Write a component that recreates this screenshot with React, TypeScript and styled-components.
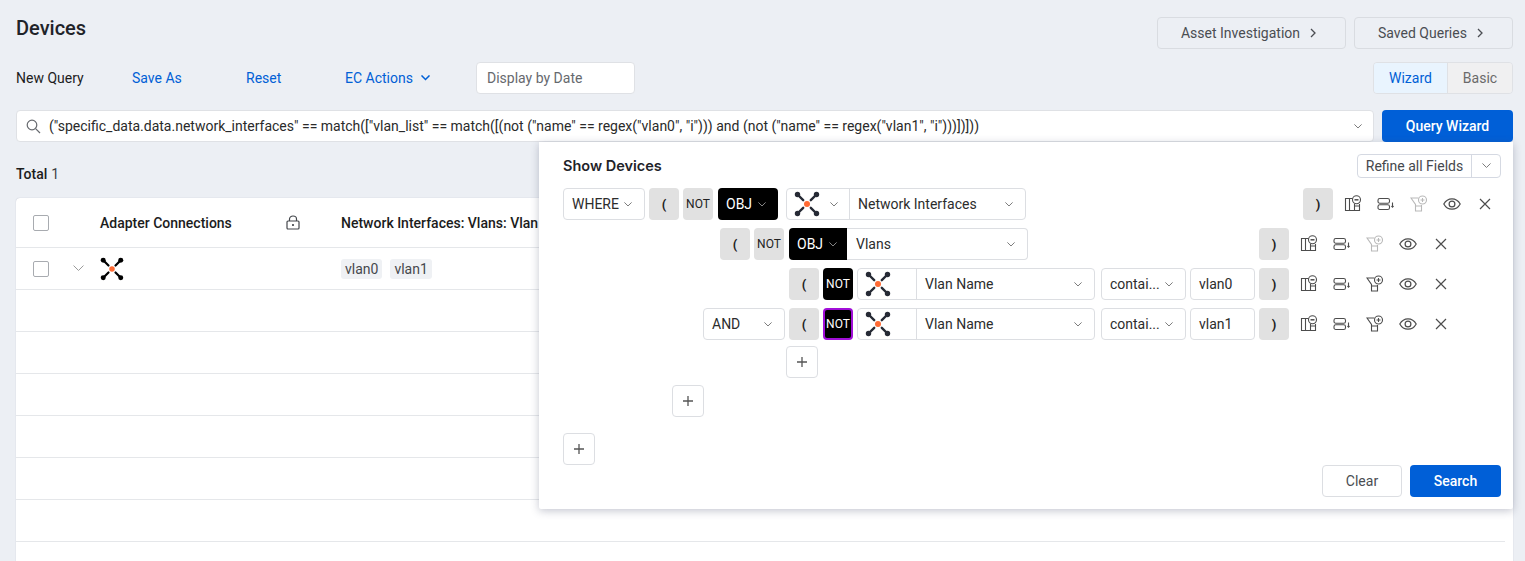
import React from "react";
import styled, { createGlobalStyle } from "styled-components";

const Global = createGlobalStyle`
  html, body { margin: 0; padding: 0; height: 561px; overflow: hidden; background: #eceff4; }
  body { font-family: Roboto, "Liberation Sans", sans-serif; color: #1c1c1c; -webkit-font-smoothing: antialiased; }
  * { box-sizing: border-box; }
  svg { display: block; flex: none; }
`;

const Page = styled.div`
  position: relative;
  height: 561px;
  padding: 17px 12px 0 16px;
  overflow: hidden;
`;
const TitleRow = styled.div`
  display: flex;
  justify-content: space-between;
  height: 32px;
`;
const Title = styled.h1`
  margin: -5px 0 0;
  font-size: 20px;
  line-height: 32px;
  font-weight: 500;
  color: #1f2329;
`;
const NavGroup = styled.div`
  display: flex;
  gap: 8px;
`;
const NavButton = styled.div<{ $w: number }>`
  width: ${(p) => p.$w}px;
  height: 32px;
  display: flex;
  align-items: center;
  justify-content: center;
  gap: 10px;
  padding-right: 6px;
  border: 1px solid #d9dce1;
  border-radius: 4px;
  font-size: 14px;
  color: #4a4d52;
`;
const ActionRow = styled.div`
  display: flex;
  align-items: center;
  height: 32px;
  margin-top: 13px;
  font-size: 14px;
`;
const Action = styled.span<{ $w: number; $plain?: boolean }>`
  display: flex;
  align-items: center;
  gap: 8px;
  width: ${(p) => p.$w}px;
  color: ${(p) => (p.$plain ? "#1c1c1c" : "#0060d6")};
`;
const DateInput = styled.div`
  width: 159px;
  height: 32px;
  display: flex;
  align-items: center;
  padding-left: 10px;
  background: #fff;
  border: 1px solid #dfe1e5;
  border-radius: 4px;
  color: #66696e;
`;
const Toggle = styled.div`
  display: flex;
  margin-left: auto;
  height: 32px;
  border: 1px solid #dfe1e5;
  border-radius: 4px;
  overflow: hidden;
`;
const ToggleItem = styled.div<{ $on?: boolean; $w: number }>`
  width: ${(p) => p.$w}px;
  display: flex;
  align-items: center;
  justify-content: center;
  background: ${(p) => (p.$on ? "#e9f4fe" : "#f0f0f1")};
  color: ${(p) => (p.$on ? "#0060d6" : "#6a6a6a")};
  ${(p) => (p.$on ? "" : "border-left: 1px solid #dfe1e5;")}
`;
const QueryRow = styled.div`
  display: flex;
  gap: 8px;
  height: 32px;
  margin-top: 16px;
`;
const SearchBar = styled.div`
  flex: 1;
  min-width: 0;
  display: flex;
  align-items: center;
  gap: 8px;
  height: 32px;
  padding: 0 11px 0 9px;
  background: #fff;
  border: 1px solid #dfe1e5;
  border-radius: 4px;
  font-size: 14px;
  color: #2a2a2a;
  white-space: nowrap;
`;
const QueryText = styled.span`
  flex: 1;
`;
const PrimaryButton = styled.div<{ $w: number }>`
  width: ${(p) => p.$w}px;
  height: 32px;
  display: flex;
  align-items: center;
  justify-content: center;
  background: #005fd7;
  color: #fff;
  border-radius: 4px;
  font-size: 14px;
  font-weight: 500;
`;
const Total = styled.div`
  margin-top: 24px;
  height: 16px;
  line-height: 16px;
  font-size: 14px;
  color: #3c3f44;
  b { font-weight: 500; color: #1c1c1c; margin-right: 4px; }
`;
const Table = styled.div`
  margin-top: 16px;
  height: 400px;
  padding-right: 8px;
  background: #fff;
  border-radius: 4px 4px 0 0;
  box-shadow: 0 0 1px rgba(90, 100, 130, 0.45);
`;
const HeaderRow = styled.div`
  display: grid;
  grid-template-columns: 84px 241px 1fr;
  align-items: center;
  height: 50px;
  border-bottom: 1px solid #e5e7ea;
  font-size: 14px;
  font-weight: 500;
`;
const BodyRow = styled.div`
  display: grid;
  grid-template-columns: 84px 241px 1fr;
  align-items: center;
  height: 42px;
  border-bottom: 1px solid #e5e7ea;
`;
const FirstCell = styled.div`
  display: flex;
  align-items: center;
  padding-left: 17px;
  gap: 24px;
`;
const SpacedCell = styled.div`
  display: flex;
  align-items: center;
  justify-content: space-between;
  padding-right: 41px;
`;
const Check = styled.span`
  width: 16px;
  height: 16px;
  border: 1px solid #a8abb0;
  border-radius: 2px;
  background: #fff;
`;
const Chips = styled.div`
  display: flex;
  gap: 8px;
`;
const Chip = styled.span`
  height: 20px;
  line-height: 20px;
  padding: 0 4px;
  background: #eff1f4;
  border-radius: 3px;
  font-size: 14px;
  color: #45484d;
`;

const Popup = styled.div`
  position: absolute;
  left: 539px;
  top: 142px;
  width: 974px;
  height: 367px;
  padding: 12px 12px 0 24px;
  background: #fff;
  box-shadow: 0 2px 8px rgba(70, 78, 110, 0.32);
  border-radius: 0 0 2px 2px;
`;
const PopupHead = styled.div`
  display: flex;
  align-items: center;
  justify-content: space-between;
  height: 23px;
`;
const PopupTitle = styled.div`
  font-family: Inter, Roboto, sans-serif;
  font-size: 14.5px;
  font-weight: 600;
  color: #1f2329;
`;
const Refine = styled.div`
  display: flex;
  align-items: center;
  width: 144px;
  height: 24px;
  border: 1px solid #d5d9e2;
  border-radius: 4px;
  font-size: 14px;
  color: #45484d;
`;
const RefineLabel = styled.span`
  width: 114px;
  text-align: center;
  border-right: 1px solid #d5d9e2;
  line-height: 22px;
`;
const RefineArrow = styled.span`
  flex: 1;
  display: flex;
  justify-content: center;
`;
const Rows = styled.div`
  display: flex;
  flex-direction: column;
  gap: 8px;
  margin-top: 11px;
`;
const Row = styled.div<{ $indent: number; $end?: number }>`
  display: flex;
  align-items: stretch;
  gap: 4px;
  height: 32px;
  padding-left: ${(p) => p.$indent}px;
  padding-right: ${(p) => p.$end ?? 0}px;
  font-size: 14px;
`;
const Select = styled.div<{ $w: number; $gap?: number }>`
  width: ${(p) => p.$w}px;
  margin-left: ${(p) => p.$gap ?? 0}px;
  display: flex;
  align-items: center;
  justify-content: space-between;
  padding: 0 12px 0 8px;
  background: #fff;
  border: 1px solid #dcdee2;
  border-radius: 4px;
  color: #2c2c2c;
  white-space: nowrap;
`;
const Paren = styled.div<{ $push?: boolean; $closing?: boolean }>`
  width: 30px;
  display: flex;
  align-items: center;
  justify-content: center;
  background: #e1e1e1;
  border-radius: 4px;
  font-size: 13px;
  font-weight: 700;
  color: #222;
  ${(p) => (p.$push ? "margin-left: auto;" : "")}
  ${(p) => (p.$closing ? "margin-right: -1px;" : "")}
`;
const Not = styled.div<{ $on?: boolean; $focus?: boolean }>`
  width: 30px;
  display: flex;
  align-items: center;
  justify-content: center;
  border-radius: 4px;
  font-size: 12px;
  background: ${(p) => (p.$on ? "#000" : "#e1e1e1")};
  color: ${(p) => (p.$on ? "#fff" : "#222")};
  border: ${(p) => (p.$focus ? "2px solid #a10fd8" : "none")};
`;
const Obj = styled.div<{ $w: number; $gap?: number; $joined?: boolean }>`
  width: ${(p) => p.$w}px;
  margin-left: ${(p) => p.$gap ?? 0}px;
  display: flex;
  align-items: center;
  gap: 6px;
  padding-left: 8px;
  background: #000;
  color: #fff;
  border-radius: ${(p) => (p.$joined ? "4px 0 0 4px" : "4px")};
`;
const Compound = styled.div<{ $w: number; $gap?: number }>`
  width: ${(p) => p.$w}px;
  margin-left: ${(p) => p.$gap ?? 0}px;
  display: flex;
  background: #fff;
  border: 1px solid #dcdee2;
  border-radius: 4px;
  color: #2c2c2c;
`;
const JoinedCompound = styled(Compound)`
  border-left: none;
  border-radius: 0 4px 4px 0;
  margin-left: -4px;
`;
const AdapterPart = styled.div<{ $w: number }>`
  width: ${(p) => p.$w}px;
  display: flex;
  align-items: center;
  justify-content: space-between;
  padding: 0 11px 0 7px;
  border-right: 1px solid #dcdee2;
`;
const FieldPart = styled.div<{ $pad: number }>`
  flex: 1;
  display: flex;
  align-items: center;
  justify-content: space-between;
  padding: 0 12px 0 ${(p) => p.$pad}px;
`;
const Tools = styled.div`
  display: flex;
  align-items: center;
`;
const ToolCell = styled.span<{ $dim?: boolean }>`
  width: 33px;
  display: flex;
  justify-content: center;
  color: ${(p) => (p.$dim ? "#b9b9b9" : "#4c4c4c")};
`;
const AddButton = styled.div<{ $left: number; $top: number }>`
  width: 32px;
  height: 32px;
  margin-left: ${(p) => p.$left}px;
  margin-top: ${(p) => p.$top}px;
  display: flex;
  align-items: center;
  justify-content: center;
  background: #fff;
  border: 1px solid #dcdee2;
  border-radius: 4px;
  color: #555;
`;
const Footer = styled.div`
  display: flex;
  justify-content: flex-end;
  gap: 8px;
`;
const ClearButton = styled.div`
  width: 80px;
  height: 32px;
  display: flex;
  align-items: center;
  justify-content: center;
  border: 1px solid #dcdee2;
  border-radius: 4px;
  font-size: 14px;
  color: #4a4d52;
`;

const Chevron = ({ size = 8, color = "#7b7b7b", w = 1 }: { size?: number; color?: string; w?: number }) => (
  <svg width={size} height={size * 0.6} viewBox="0 0 10 6" fill="none" stroke={color} strokeWidth={w * (10 / size)}>
    <path d="M0.5 0.5 L5 5 L9.5 0.5" />
  </svg>
);
const ChevronRight = () => (
  <svg width="6" height="10" viewBox="0 0 6 10" fill="none" stroke="#4a4d52" strokeWidth="1.3">
    <path d="M1 1 L5 5 L1 9" />
  </svg>
);
const Logo = ({ size = 26, ink = "#262a35" }: { size?: number; ink?: string }) => (
  <svg width={size} height={size} viewBox="0 0 26 26">
    <path d="M3.5 3.5 L9.2 9.2 M22.5 3.5 L16.8 9.2 M3.5 22.5 L9.2 16.8 M22.5 22.5 L16.8 16.8" stroke={ink} strokeWidth="2.4" strokeLinecap="round" />
    <g fill={ink}>
      <circle cx="3.5" cy="3.5" r="2.7" />
      <circle cx="22.5" cy="3.5" r="2.7" />
      <circle cx="3.5" cy="22.5" r="2.7" />
      <circle cx="22.5" cy="22.5" r="2.7" />
    </g>
    <circle cx="13" cy="13" r="3" fill="#ff6a33" />
  </svg>
);
const ColumnsIcon = () => (
  <svg width="18" height="18" viewBox="0 0 18 18" fill="none" stroke="currentColor" strokeWidth="1.1">
    <path d="M8.5 3.5 H1.5 V15.5 H15.5 V9 M5.5 3.5 V15.5 M10.5 9 V15.5 M10.5 11 H15.5" />
    <circle cx="12.5" cy="4.8" r="4" />
    <path d="M10.5 4.8 H14.5" strokeWidth="1.5" />
  </svg>
);
const StackIcon = () => (
  <svg width="18" height="18" viewBox="0 0 18 18" fill="none" stroke="currentColor" strokeWidth="1.1">
    <rect x="1" y="3.5" width="11.5" height="4.7" rx="1.8" />
    <rect x="1" y="9.8" width="11.5" height="4.7" rx="1.8" />
    <path d="M15.5 7.5 V12 M14.4 11 L15.5 12.2 L16.6 11" />
  </svg>
);
const FunnelIcon = () => (
  <svg width="18" height="18" viewBox="0 0 18 18" fill="none" stroke="currentColor" strokeWidth="1.1">
    <path d="M8.5 3 H1 L5.5 9.5 V16 H11.5 V10 M5.5 11 H11.5" />
    <circle cx="12.5" cy="5" r="4" />
    <path d="M10.5 5 H14.5 M12.5 3 V7" />
  </svg>
);
const EyeIcon = () => (
  <svg width="18" height="18" viewBox="0 0 18 18" fill="none" stroke="currentColor" strokeWidth="1.2">
    <path d="M0.8 9 C3 5 6 3.8 9 3.8 C12 3.8 15 5 17.2 9 C15 13 12 14.2 9 14.2 C6 14.2 3 13 0.8 9 Z" />
    <circle cx="9" cy="9" r="2.9" />
  </svg>
);
const XIcon = () => (
  <svg width="18" height="18" viewBox="0 0 18 18" fill="none" stroke="currentColor" strokeWidth="1.2">
    <path d="M4 4 L14 14 M14 4 L4 14" />
  </svg>
);
const Plus = () => (
  <svg width="12" height="12" viewBox="0 0 12 12" fill="none" stroke="currentColor" strokeWidth="1.3">
    <path d="M6 1 V11 M1 6 H11" />
  </svg>
);
const SearchIcon = () => (
  <svg width="15" height="15" viewBox="0 0 15 15" fill="none" stroke="#66696e" strokeWidth="1.2">
    <circle cx="6" cy="6" r="4.8" />
    <path d="M9.6 9.6 L14 14" />
  </svg>
);
const LockIcon = () => (
  <svg width="14" height="15" viewBox="0 0 14 15" fill="none" stroke="#44474c" strokeWidth="1.2">
    <rect x="1" y="6" width="12" height="8" rx="1" />
    <path d="M3.5 6 V4 A3.5 3 0 0 1 10.5 4 V6" />
    <circle cx="7" cy="10" r="0.5" fill="#44474c" />
  </svg>
);

const ToolSet = ({ dim }: { dim?: boolean }) => (
  <Tools>
    <ToolCell><ColumnsIcon /></ToolCell>
    <ToolCell><StackIcon /></ToolCell>
    <ToolCell $dim={dim}><FunnelIcon /></ToolCell>
    <ToolCell><EyeIcon /></ToolCell>
    <ToolCell><XIcon /></ToolCell>
  </Tools>
);

const query =
  '("specific_data.data.network_interfaces" == match(["vlan_list" == match([(not ("name" == regex("vlan0", "i"))) and (not ("name" == regex("vlan1", "i")))])]))';

const LeafFields = ({ value }: { value: string }) => (
  <>
    <Compound $w={238}>
      <AdapterPart $w={59}><Logo /></AdapterPart>
      <FieldPart $pad={8}>Vlan Name<Chevron /></FieldPart>
    </Compound>
    <Select $w={85} $gap={2}>contai...<Chevron /></Select>
    <Select $w={65}>{value}</Select>
    <Paren $closing>)</Paren>
  </>
);

export default function App() {
  return (
    <Page>
      <Global />
      <TitleRow>
        <Title>Devices</Title>
        <NavGroup>
          <NavButton $w={189}>Asset Investigation <ChevronRight /></NavButton>
          <NavButton $w={159}>Saved Queries <ChevronRight /></NavButton>
        </NavGroup>
      </TitleRow>
      <ActionRow>
        <Action $w={116} $plain>New Query</Action>
        <Action $w={114}>Save As</Action>
        <Action $w={99}>Reset</Action>
        <Action $w={131}>EC Actions <Chevron size={9} color="#0060d6" w={1.5} /></Action>
        <DateInput>Display by Date</DateInput>
        <Toggle>
          <ToggleItem $on $w={73}>Wizard</ToggleItem>
          <ToggleItem $w={65}>Basic</ToggleItem>
        </Toggle>
      </ActionRow>
      <QueryRow>
        <SearchBar>
          <SearchIcon />
          <QueryText>{query}</QueryText>
          <Chevron />
        </SearchBar>
        <PrimaryButton $w={131}>Query Wizard</PrimaryButton>
      </QueryRow>
      <Total><b>Total</b>1</Total>
      <Table>
        <HeaderRow>
          <FirstCell><Check /></FirstCell>
          <SpacedCell>Adapter Connections <LockIcon /></SpacedCell>
          <div>Network Interfaces: Vlans: Vlan Name</div>
        </HeaderRow>
        <BodyRow>
          <FirstCell><Check /><Chevron color="#9a9a9a" size={11} /></FirstCell>
          <div><Logo size={24} ink="#000" /></div>
          <Chips><Chip>vlan0</Chip><Chip>vlan1</Chip></Chips>
        </BodyRow>
        {[0, 1, 2, 3, 4, 5].map((i) => <BodyRow key={i} />)}
      </Table>

      <Popup>
        <PopupHead>
          <PopupTitle>Show Devices</PopupTitle>
          <Refine>
            <RefineLabel>Refine all Fields</RefineLabel>
            <RefineArrow><Chevron size={9} /></RefineArrow>
          </Refine>
        </PopupHead>
        <Rows>
          <Row $indent={0}>
            <Select $w={82}>WHERE<Chevron /></Select>
            <Paren>(</Paren>
            <Not>NOT</Not>
            <Obj $w={60} $gap={1}>OBJ <Chevron color="#888" /></Obj>
            <Compound $w={240} $gap={4}>
              <AdapterPart $w={63}><Logo /><Chevron /></AdapterPart>
              <FieldPart $pad={8}>Network Interfaces<Chevron /></FieldPart>
            </Compound>
            <Paren $push $closing>)</Paren>
            <ToolSet dim />
          </Row>
          <Row $indent={157} $end={44}>
            <Paren>(</Paren>
            <Not>NOT</Not>
            <Obj $w={58} $gap={1} $joined>OBJ <Chevron color="#888" /></Obj>
            <JoinedCompound $w={181}>
              <FieldPart $pad={9}>Vlans<Chevron /></FieldPart>
            </JoinedCompound>
            <Paren $push $closing>)</Paren>
            <ToolSet dim />
          </Row>
          <Row $indent={226} $end={44}>
            <Paren>(</Paren>
            <Not $on>NOT</Not>
            <LeafFields value="vlan0" />
            <ToolSet />
          </Row>
          <Row $indent={140} $end={44}>
            <Select $w={82}>AND<Chevron /></Select>
            <Paren>(</Paren>
            <Not $on $focus>NOT</Not>
            <LeafFields value="vlan1" />
            <ToolSet />
          </Row>
        </Rows>
        <AddButton $left={223} $top={6}><Plus /></AddButton>
        <AddButton $left={109} $top={7}><Plus /></AddButton>
        <AddButton $left={0} $top={16}><Plus /></AddButton>
        <Footer>
          <ClearButton>Clear</ClearButton>
          <PrimaryButton $w={91}>Search</PrimaryButton>
        </Footer>
      </Popup>
    </Page>
  );
}
